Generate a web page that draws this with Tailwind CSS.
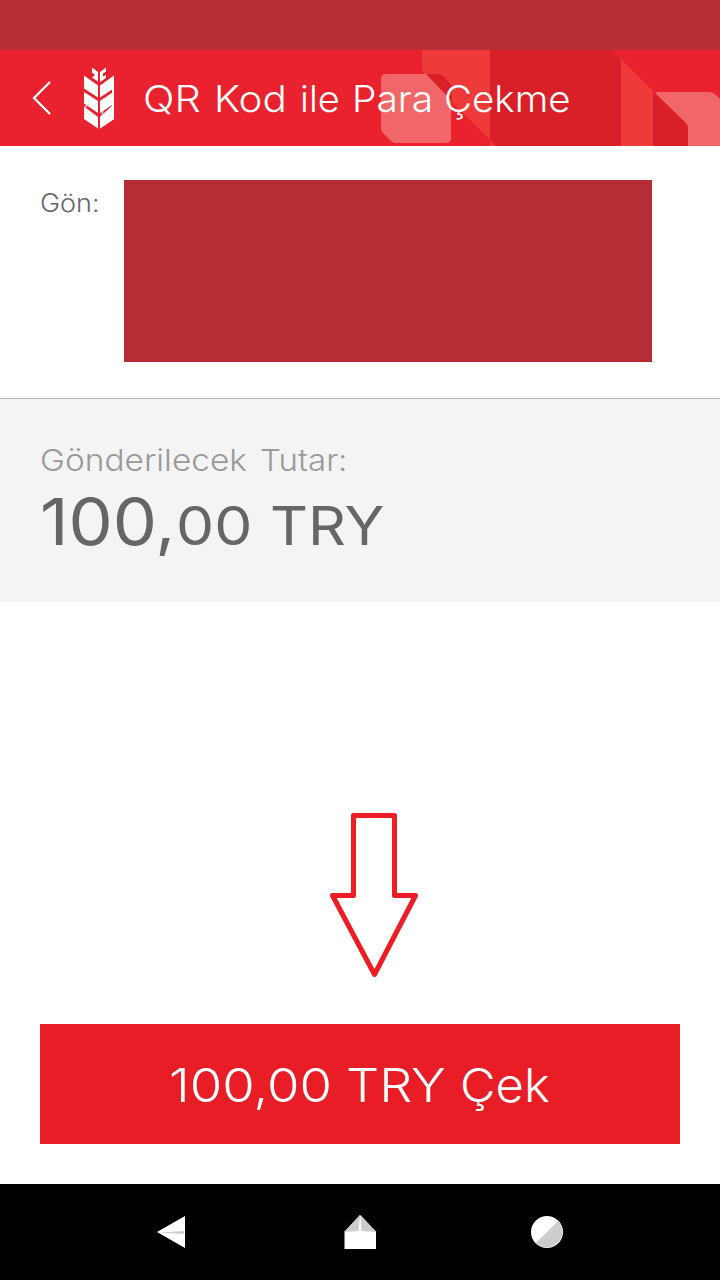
<!DOCTYPE html>
<html lang="tr">

<head>
  <meta charset="UTF-8">
  <meta name="viewport" content="width=device-width, initial-scale=1.0">
  <title>QR Kod ile Para Çekme</title>
  <script src="https://cdn.jsdelivr.net/npm/@tailwindcss/browser@4"></script>
</head>

<body class="bg-white font-['Inter',sans-serif]">
  <div class="flex flex-col w-[720px] h-[1280px] overflow-hidden">

    <!-- status bar -->
    <div class="h-[50px] shrink-0 bg-[#b72d34]"></div>

    <!-- header -->
    <header class="relative flex items-center h-24 shrink-0 bg-[#ea212e]">
      <svg class="absolute inset-0" width="720" height="96" viewBox="0 0 720 96">
        <path d="M422 0H490V96H496L425 25Q422 22 422 18Z" fill="#ee3a39" />
        <path d="M490 0H612L619 7Q621 9 621 13V96H496L490 90Z" fill="#d92029" />
        <path d="M612 0L619 7Q621 9 621 13V96H653V41Z" fill="#ee3a39" />
        <path d="M653 46Q653 42 657 44L686 73Q688 75 688 79V96H653Z" fill="#d92029" />
        <path d="M655 43Q656 42 659 42H709Q713 42 716 45L720 49V96H688V79Q688 75 686 73Z" fill="#f16669" />
        <path d="M424 24H437Q441 24 445 28L452 36V52Z" fill="#d92029" />
        <path d="M386 24H426L449 48Q451 50 451 54V88Q451 93 446 93H396Q393 93 391 91L383 83Q381 81 381 78V29Q381 24 386 24Z" fill="#f16669" />
      </svg>
      <svg class="relative ml-8 shrink-0" width="20" height="36" viewBox="0 0 20 36" fill="none" stroke="#fff" stroke-width="2.3">
        <path d="M18 2L2 18L18 34" />
      </svg>
      <svg class="relative ml-8 shrink-0" width="30" height="62" viewBox="0 0 30 62" fill="#fff">
        <path d="M0 8.500L14 18.500V30.500L0 21.500Z" />
        <path d="M0 25L14 34V46L0 36.500Z" />
        <path d="M0 39.500L14 50V61.500L0 52Z" />
        <path d="M30 8.500L16 18.500V30.500L28 22.500V38L16 46V34L28 26V39L16 50V61.500L30 52Z" />
        <path d="M28 26L16 34V46L28 37.500Z" />
        <path d="M28 39L16 50V61.500L30 52V38Z" />
        <path d="M8 .5L14 5V14.500L8 10.500L10.500 8.500V7.500L8 5.500Z" />
        <path d="M22 .5L16 5V15L22 11V8L19 9.500V6.500L22 4.500Z" />
        <path d="M1 40L5 37M18.500 44V49" stroke="#f9c9cc" stroke-width="1.500" />
      </svg>
      <h1 class="relative ml-[29px] pt-0.5 flex text-[37px] leading-[48px] font-light text-white whitespace-nowrap">
        <span class="origin-left scale-x-[1.12]">QR</span>
        <span class="ml-[19px] origin-left scale-x-[1.09]">Kod</span>
        <span class="ml-5 origin-left scale-x-[1.03]">ile</span>
        <span class="ml-[13px] origin-left scale-x-[1.05]">Para</span>
        <span class="ml-[15px] origin-left scale-x-[1.04]">Çekme</span>
      </h1>
    </header>

    <!-- recipient -->
    <section class="flex h-[253px] shrink-0 border-b border-[#b9b9b9] pt-[34px] pl-10">
      <div class="w-21 pt-1.5 text-[25px] leading-[34px] font-light text-[#666] origin-left scale-x-[1.08]">Gön:</div>
      <div class="w-[528px] h-[182px] bg-[#b72d34]"></div>
    </section>

    <!-- amount -->
    <section class="h-[203px] shrink-0 bg-[#f4f4f4] pt-[39px] pl-10 whitespace-nowrap">
      <div class="flex text-[30px] leading-[44px] font-light text-[#999]">
        <span class="origin-left scale-x-[1.115]">Gönderilecek</span>
        <span class="ml-[34px] origin-left scale-x-[1.1]">Tutar:</span>
      </div>
      <div class="flex items-baseline text-[#666] leading-[80px]">
        <span class="origin-left scale-x-[1.08] text-[65px]">100,</span>
        <span class="ml-2.5 origin-left scale-x-[1.12] text-[54px]">00</span>
        <span class="ml-[26px] origin-left scale-x-[1.09] text-[54px]">TRY</span>
      </div>
    </section>

    <!-- action -->
    <main class="flex flex-col grow px-10 pb-10">
      <svg class="mt-[210px] ml-[290px]" width="90" height="166" viewBox="0 0 90 166" fill="none" stroke="#ee1c25" stroke-width="5" stroke-linejoin="round">
        <path d="M23.500 3.500H64.500V83.500H85.500L44.500 162.500L2.500 83.500H23.500Z" />
      </svg>
      <button class="mt-auto flex items-center h-30 shrink-0 bg-[#e91d26] pt-0.5 pl-[129px] text-[47px] font-light text-white">
        <span class="origin-left scale-x-[1.12]">100,00</span>
        <span class="ml-[31px] origin-left scale-x-[1.11]">TRY</span>
        <span class="ml-[25px] origin-left scale-x-[1.04]">Çek</span>
      </button>
    </main>

    <!-- navigation bar -->
    <nav class="flex h-24 shrink-0 bg-black">
      <svg width="720" height="96" viewBox="0 0 720 96">
        <path d="M157 48L185 32V64Z" fill="#fff" />
        <path d="M159 48.500L184 47V50Z" fill="#ccc" />
        <path d="M360 31L376 47.500V65H344.500V47.500Z" fill="#fff" />
        <path d="M360 31L358.500 47L344.500 48ZM360.500 31L361.500 47L376 48Z" fill="#ccc" />
        <circle cx="547" cy="48" r="16" fill="#fff" />
        <path d="M558.300 36.700A16 16 0 0 1 535.700 59.300Z" fill="#ccc" />
      </svg>
    </nav>
  </div>
</body>

</html>
